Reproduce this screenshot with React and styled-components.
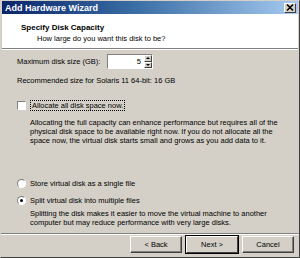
import React from "react";
import styled, { createGlobalStyle } from "styled-components";

const Global = createGlobalStyle`
  html, body { margin: 0; padding: 0; background: #d4d0c8; }
  body { font-family: "Liberation Sans", "DejaVu Sans", sans-serif; font-size: 7.5px; color: #000; }
`;

const Window = styled.div`
  width: 300px;
  height: 258px;
  box-sizing: border-box;
  background: #d4d0c8;
  border: 1px solid #d4d0c8;
  border-right-color: #404040;
  border-bottom-color: #404040;
  display: flex;
  flex-direction: column;
`;

const TitleBar = styled.div`
  height: 13px;
  margin: 0 1px;
  background: linear-gradient(to right, #0a246a, #3a6ea5 45%, #a6caf0);
  display: flex;
  align-items: center;
  justify-content: space-between;
  padding: 0 2px 0 3px;
`;

const Title = styled.span`
  color: #fff;
  font-weight: bold;
  font-size: 9px;
`;

const CloseBtn = styled.div`
  width: 12px;
  height: 10px;
  box-sizing: border-box;
  background: #d4d0c8;
  border: 1px solid;
  border-color: #fff #404040 #404040 #fff;
  display: flex;
  align-items: center;
  justify-content: center;
`;

const Header = styled.div`
  height: 35px;
  margin: 0 1px;
  background: #fff;
  border-bottom: 1px solid #808080;
  box-shadow: 0 1px 0 #fff;
  padding: 9px 0 0 19px;
  box-sizing: border-box;
`;

const HeaderTitle = styled.div`
  font-weight: bold;
  font-size: 8px;
`;

const HeaderSub = styled.div`
  margin: 2px 0 0 16px;
`;

const Body = styled.div`
  flex: 1;
  padding: 5px 0 0 16px;
  display: flex;
  flex-direction: column;
`;

const SizeRow = styled.div`
  display: flex;
  align-items: center;
  height: 15px;
`;

const Label = styled.span`
  width: 90px;
`;

const Spin = styled.div`
  width: 46px;
  height: 15px;
  box-sizing: border-box;
  background: #fff;
  border: 1px solid;
  border-color: #808080 #fff #fff #808080;
  display: flex;
`;

const SpinValue = styled.div`
  flex: 1;
  text-align: right;
  padding: 2px 3px 0 0;
`;

const SpinArrows = styled.div`
  width: 8px;
  display: flex;
  flex-direction: column;
`;

const Arrow = styled.div`
  flex: 1;
  background: #d4d0c8;
  border: 1px solid;
  border-color: #fff #404040 #404040 #fff;
  display: flex;
  align-items: center;
  justify-content: center;
  &::after {
    content: "";
    border-left: 2px solid transparent;
    border-right: 2px solid transparent;
    ${({ down }) => (down ? "border-top: 2px solid #000;" : "border-bottom: 2px solid #000;")}
  }
`;

const Recommended = styled.div`
  margin-top: 7px;
`;

const Option = styled.div`
  display: flex;
  align-items: center;
  margin-top: ${({ gap }) => gap}px;
`;

const Checkbox = styled.div`
  width: 9px;
  height: 9px;
  box-sizing: border-box;
  background: #fff;
  border: 1px solid;
  border-color: #808080 #fff #fff #808080;
  margin-right: 4px;
`;

const Radio = styled.div`
  width: 9px;
  height: 9px;
  box-sizing: border-box;
  border-radius: 50%;
  background: #fff;
  border: 1px solid;
  border-color: #808080 #fff #fff #808080;
  margin-right: 4px;
  display: flex;
  align-items: center;
  justify-content: center;
  &::after {
    content: "";
    width: 3px;
    height: 3px;
    border-radius: 50%;
    background: ${({ checked }) => (checked ? "#000" : "transparent")};
  }
`;

const Focus = styled.span`
  border: 1px dotted #000;
  padding: 0 1px;
`;

const Para = styled.div`
  margin: ${({ top }) => top}px 0 0 13px;
  line-height: 9px;
  white-space: nowrap;
`;

const Footer = styled.div`
  height: 24px;
  border-top: 1px solid #808080;
  box-shadow: inset 0 1px 0 #fff;
  display: flex;
  justify-content: flex-end;
  align-items: center;
  padding: 0 5px 2px 0;
  box-sizing: border-box;
`;

const Button = styled.div`
  width: 52px;
  height: 17px;
  box-sizing: border-box;
  border: 1px solid;
  border-color: #fff #404040 #404040 #fff;
  box-shadow: ${({ def }) => (def ? "0 0 0 1px #000" : "inset -1px -1px 0 #808080")};
  display: flex;
  align-items: center;
  justify-content: center;
  margin-left: 4px;
`;

const X = () => (
  <svg width="8" height="7" viewBox="0 0 8 7">
    <path d="M1 0.5 L7 6.5 M7 0.5 L1 6.5" stroke="#000" strokeWidth="1.5" />
  </svg>
);

export default function App() {
  return (
    <>
      <Global />
      <Window>
        <TitleBar>
          <Title>Add Hardware Wizard</Title>
          <CloseBtn><X /></CloseBtn>
        </TitleBar>
        <Header>
          <HeaderTitle>Specify Disk Capacity</HeaderTitle>
          <HeaderSub>How large do you want this disk to be?</HeaderSub>
        </Header>
        <Body>
          <SizeRow>
            <Label>Maximum disk size (GB):</Label>
            <Spin>
              <SpinValue>5</SpinValue>
              <SpinArrows>
                <Arrow />
                <Arrow down />
              </SpinArrows>
            </Spin>
          </SizeRow>
          <Recommended>Recommended size for Solaris 11 64-bit: 16 GB</Recommended>
          <Option gap={15}>
            <Checkbox />
            <Focus>Allocate all disk space now.</Focus>
          </Option>
          <Para top={7}>
            Allocating the full capacity can enhance performance but requires all of the<br />
            physical disk space to be available right now. If you do not allocate all the<br />
            space now, the virtual disk starts small and grows as you add data to it.
          </Para>
          <Option gap={34}>
            <Radio />
            <span>Store virtual disk as a single file</span>
          </Option>
          <Option gap={8}>
            <Radio checked />
            <span>Split virtual disk into multiple files</span>
          </Option>
          <Para top={4}>
            Splitting the disk makes it easier to move the virtual machine to another<br />
            computer but may reduce performance with very large disks.
          </Para>
        </Body>
        <Footer>
          <Button>&lt; Back</Button>
          <Button def>Next &gt;</Button>
          <Button>Cancel</Button>
        </Footer>
      </Window>
    </>
  );
}
